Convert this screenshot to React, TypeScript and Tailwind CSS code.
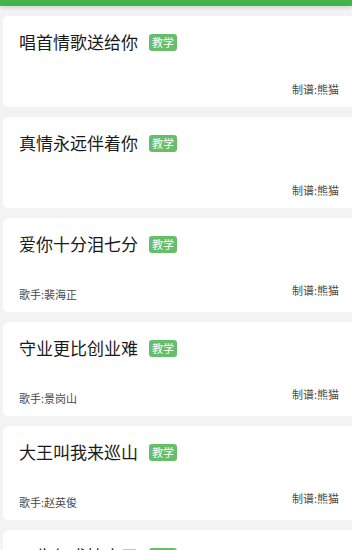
import React from 'react';

type Song = {
  title: string;
  singer?: string;
};

const songs: Song[] = [
  { title: '唱首情歌送给你' },
  { title: '真情永远伴着你' },
  { title: '爱你十分泪七分', singer: '裴海正' },
  { title: '守业更比创业难', singer: '景岗山' },
  { title: '大王叫我来巡山', singer: '赵英俊' },
  { title: '一生何求情未了', singer: '陈百强' },
];

function SongCard({ song }: { song: Song }) {
  return (
    <div
      className={
        'ml-[3px] flex w-[360px] flex-col justify-between rounded-[6px] bg-white pl-4 pr-[24px] pt-[15px] ' +
        (song.singer ? 'h-[94px] pb-[11px]' : 'h-[91px] pb-[11px]')
      }
    >
      <div className="flex items-center">
        <span className="text-[17px] leading-[22px] text-[#1a1a1a]">{song.title}</span>
        <span className="ml-[11px] rounded-[3px] bg-[#68bd6b] px-[3px] text-[11px] leading-[17px] text-white">
          教学
        </span>
      </div>
      <div className="flex items-end justify-between text-[11px] leading-[14px] text-[#4a4a4a]">
        <span>{song.singer ? `歌手:${song.singer}` : ''}</span>
        <span className={song.singer ? 'mb-[4px]' : ''}>制谱:熊猫</span>
      </div>
    </div>
  );
}

export default function App() {
  return (
    <div
      className="h-[550px] w-[352px] overflow-hidden bg-[#f3f3f3]"
      style={{ fontFamily: '"Noto Sans CJK SC", "Noto Sans", sans-serif' }}
    >
      <div className="h-[6px] bg-[#41b549] shadow-[0_2px_4px_rgba(0,0,0,0.12)]" />
      <div className="flex flex-col gap-[10px] pt-[10px]">
        {songs.map((s) => (
          <SongCard key={s.title} song={s} />
        ))}
      </div>
    </div>
  );
}
